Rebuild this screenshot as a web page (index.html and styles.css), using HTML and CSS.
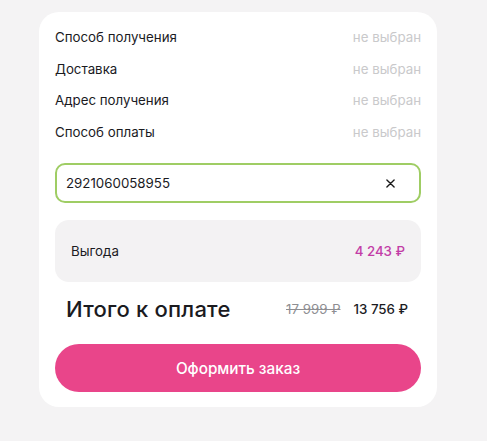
FILE: index.html
```html
<!DOCTYPE html>
<html lang="ru">
<head>
<meta charset="utf-8">
<link rel="stylesheet" href="styles.css">
</head>
<body>
<div class="card">
  <div class="rows">
    <div class="row"><span>Способ получения</span><span class="muted">не выбран</span></div>
    <div class="row"><span>Доставка</span><span class="muted">не выбран</span></div>
    <div class="row"><span>Адрес получения</span><span class="muted">не выбран</span></div>
    <div class="row"><span>Способ оплаты</span><span class="muted">не выбран</span></div>
  </div>
  <div class="promo">
    <span class="promo-value">2921060058955</span>
    <svg class="clear" width="10" height="10" viewBox="0 0 10 10"><path d="M1 1L9 9M9 1L1 9" stroke="#1a1a1a" stroke-width="1.5" stroke-linecap="round"/></svg>
  </div>
  <div class="benefit">
    <span>Выгода</span>
    <span class="benefit-sum">4 243 ₽</span>
  </div>
  <div class="total">
    <span class="total-title">Итого к оплате</span>
    <span class="prices"><s class="old">17 999 ₽</s><span class="new">13 756 ₽</span></span>
  </div>
  <button class="order">Оформить заказ</button>
</div>
</body>
</html>
```
FILE: styles.css
```css
html, body {
  margin: 0;
  padding: 0;
  background: #f4f3f4;
  font-family: Inter, "Noto Sans", sans-serif;
  color: #1b1b1f;
}
body {
  padding: 12px 0 0 39px;
}
.card {
  width: 366px;
  background: #ffffff;
  border-radius: 20px;
  padding: 15px 16px 15px 16px;
  display: flex;
  flex-direction: column;
}
.rows {
  display: flex;
  flex-direction: column;
  gap: 11.7px;
}
.row {
  display: flex;
  justify-content: space-between;
  font-size: 13.3px;
  line-height: 20px;
}
.muted {
  color: #c9c9cb;
}
.promo {
  margin-top: 21px;
  height: 36px;
  border: 2px solid #9fcd64;
  border-radius: 10px;
  display: flex;
  align-items: center;
  justify-content: space-between;
  padding: 0 24px 0 9px;
  font-size: 13.3px;
}
.clear {
  display: block;
  width: 9px;
  height: 9px;
}
.benefit {
  margin-top: 17px;
  height: 62px;
  background: #f3f2f3;
  border-radius: 14px;
  display: flex;
  align-items: center;
  justify-content: space-between;
  padding: 0 16px;
  font-size: 13.3px;
}
.benefit-sum {
  color: #c23da6;
  font-weight: 500;
}
.total {
  margin-top: 13px;
  height: 28px;
  display: flex;
  align-items: center;
  justify-content: space-between;
  padding: 0 13px 0 11px;
}
.total-title {
  font-size: 22px;
  font-weight: 500;
  letter-spacing: 0.2px;
}
.prices {
  display: flex;
  gap: 13px;
  font-size: 13.3px;
  font-weight: 500;
}
.old {
  color: #8e8e92;
  font-weight: 400;
}
.order {
  margin-top: 21px;
  height: 48px;
  border: none;
  border-radius: 24px;
  background: #e9458a;
  color: #ffffff;
  font-family: Inter, "Noto Sans", sans-serif;
  font-size: 15.3px;
  font-weight: 500;
  padding: 0;
  cursor: pointer;
}
```
